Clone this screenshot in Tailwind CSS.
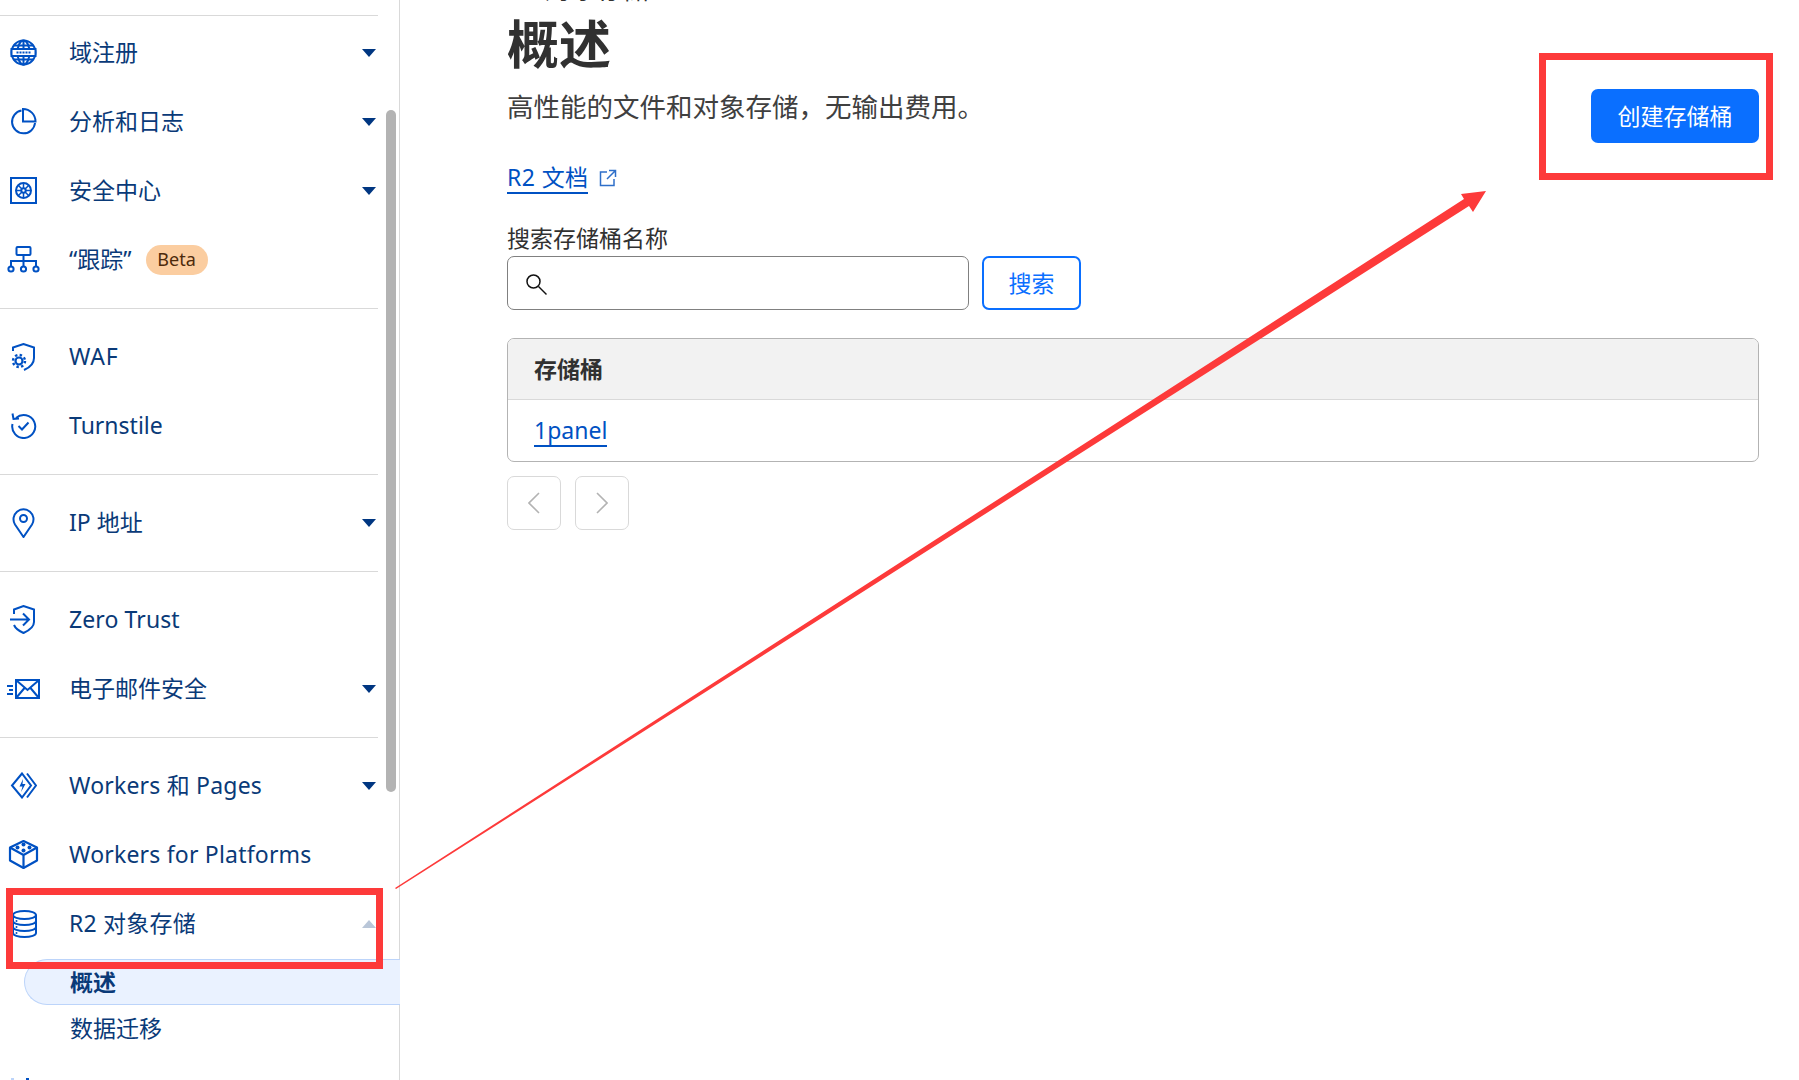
<!DOCTYPE html>
<html lang="zh-CN">

<head>
    <meta charset="UTF-8">
    <title>R2 对象存储</title>
    <script src="https://cdn.jsdelivr.net/npm/@tailwindcss/browser@4"></script>
</head>

<body class="bg-white font-['Noto_Sans','Noto_Sans_CJK_SC',sans-serif] text-[23px] text-[#313131]">
    <div class="relative flex h-[1080px] w-[1799px] overflow-hidden">

        <!-- sidebar -->
        <aside class="relative h-full w-[400px] shrink-0 border-r border-[#d9d9d9] pt-[15px] text-[#0a3a78]">
            <div class="w-[378px] border-t border-[#d9d9d9] pt-[2px] pb-[14px]">
                <div class="flex h-[69px] items-center">
                    <svg class="ml-[10px] mr-[32px] h-[27px] w-[27px] shrink-0" viewBox="0 0 27 27" fill="none" stroke="#0051c3" stroke-width="2"><circle cx="13.500" cy="13.500" r="12"/><ellipse cx="13.500" cy="13.500" rx="6" ry="12"/><path d="M13.500 1.500v25M3.500 6.500h20M3.500 20.500h20"/><path d="M1.500 10h24v7h-24z" fill="#fff"/><path d="M6.500 13.500h14" stroke-width="2.200" stroke-dasharray="2 1"/></svg>
                    <span>域注册</span>
                    <svg class="ml-auto mr-[2px] h-[8px] w-[14px]" viewBox="0 0 14 8"><path d="M0 0h14L7 8z" fill="#003681"/></svg>
                </div>
                <div class="flex h-[69px] items-center">
                    <svg class="ml-[10px] mr-[32px] h-[27px] w-[27px] shrink-0" viewBox="0 0 27 27" fill="none" stroke="#0051c3" stroke-width="2"><path d="M11.500 2.500A11.500 11.500 0 1 0 25 15"/><path d="M13 1A12.500 12.500 0 0 1 25.500 13.500H13z"/></svg>
                    <span>分析和日志</span>
                    <svg class="ml-auto mr-[2px] h-[8px] w-[14px]" viewBox="0 0 14 8"><path d="M0 0h14L7 8z" fill="#003681"/></svg>
                </div>
                <div class="flex h-[69px] items-center">
                    <svg class="ml-[10px] mr-[32px] h-[27px] w-[27px] shrink-0" viewBox="0 0 27 27" fill="none" stroke="#0051c3" stroke-width="2"><rect x="1" y="1" width="25" height="25"/><circle cx="13.500" cy="13.500" r="7.500"/><circle cx="13.500" cy="13.500" r="2.200"/><path d="M13.500 6v5M13.500 16v5M6 13.500h5M16 13.500h5M8.200 8.200l3.500 3.500M15.300 15.300l3.500 3.500M18.800 8.200l-3.500 3.500M11.700 15.300l-3.500 3.500" stroke-width="1.500"/></svg>
                    <span>安全中心</span>
                    <svg class="ml-auto mr-[2px] h-[8px] w-[14px]" viewBox="0 0 14 8"><path d="M0 0h14L7 8z" fill="#003681"/></svg>
                </div>
                <div class="flex h-[69px] items-center">
                    <svg class="ml-[7px] mr-[29px] h-[33px] w-[33px] shrink-0" viewBox="0 0 33 27" fill="none" stroke="#0051c3" stroke-width="2"><rect x="9.500" y="1" width="14" height="8" rx="1"/><path d="M16.500 9v12M4 20v-5h25v5"/><circle cx="4" cy="23" r="2.600"/><circle cx="16.500" cy="23" r="2.600"/><circle cx="29" cy="23" r="2.600"/></svg>
                    <span>“跟踪”</span>
                    <span class="ml-[14px] flex h-[30px] w-[62px] items-center justify-center rounded-full bg-[#fbcda0] text-[18px] text-[#4d2a0c]">Beta</span>
                </div>
            </div>

            <div class="w-[378px] border-t border-[#d9d9d9] pt-[13px] pb-[14px]">
                <div class="flex h-[69px] items-center">
                    <svg class="ml-[10px] mr-[32px] h-[28px] w-[27px] shrink-0" viewBox="0 0 27 28" fill="none" stroke="#0051c3" stroke-width="2"><path d="M3 8V4.500L13.500 1 24 4.500V15c0 5.500-4 9.500-10 12"/><circle cx="9" cy="18" r="3.500" stroke-width="2.200"/><circle cx="9" cy="18" r="6" stroke-width="2.400" stroke-dasharray="2.400 2.300"/></svg>
                    <span class="tracking-[0.8px]">WAF</span>
                </div>
                <div class="flex h-[69px] items-center">
                    <svg class="ml-[10px] mr-[32px] h-[27px] w-[27px] shrink-0" viewBox="0 0 27 27" fill="none" stroke="#0051c3" stroke-width="2"><path d="M6 6a11.500 11.500 0 1 1-3.500 6"/><path d="M2.500 1.500 3.500 7l5.500-.5"/><path d="m8.500 14 3.500 3.500 6.500-7"/></svg>
                    <span>Turnstile</span>
                </div>
            </div>

            <div class="w-[378px] border-t border-[#d9d9d9] pt-[13px] pb-[14px]">
                <div class="flex h-[69px] items-center">
                    <svg class="ml-[10px] mr-[32px] h-[30px] w-[27px] shrink-0" viewBox="0 0 27 30" fill="none" stroke="#0051c3" stroke-width="2"><path d="M13.500 29 5 16.500a10 10 0 1 1 17 0z"/><circle cx="13.500" cy="10.500" r="3.500"/></svg>
                    <span>IP 地址</span>
                    <svg class="ml-auto mr-[2px] h-[8px] w-[14px]" viewBox="0 0 14 8"><path d="M0 0h14L7 8z" fill="#003681"/></svg>
                </div>
            </div>

            <div class="w-[378px] border-t border-[#d9d9d9] pt-[13px] pb-[14px]">
                <div class="flex h-[69px] items-center">
                    <svg class="ml-[10px] mr-[32px] h-[29px] w-[27px] shrink-0" viewBox="0 0 27 29" fill="none" stroke="#0051c3" stroke-width="2"><path d="M4 9V4.500L13.500 1 24 4.500V17c0 5-5 8.500-10.500 11C9 26 5.500 23.500 4 20"/><path d="M0 14.500h19M13 8.500l6 6-6 6"/></svg>
                    <span class="tracking-[0.1px]">Zero Trust</span>
                </div>
                <div class="flex h-[69px] items-center">
                    <svg class="ml-[7px] mr-[29px] h-[20px] w-[33px] shrink-0" viewBox="0 0 33 20" fill="none" stroke="#0051c3" stroke-width="2"><rect x="9" y="1" width="23" height="18"/><path d="m9.500 1.500 11 9.500 11-9.500M9.500 18.500l8-9.500M31.500 18.500l-8-9.500M0 7h6M2 11h4M0 15h6"/></svg>
                    <span>电子邮件安全</span>
                    <svg class="ml-auto mr-[2px] h-[8px] w-[14px]" viewBox="0 0 14 8"><path d="M0 0h14L7 8z" fill="#003681"/></svg>
                </div>
            </div>

            <div class="w-[378px] border-t border-[#d9d9d9] pt-[13px]">
                <div class="flex h-[69px] items-center">
                    <svg class="ml-[10px] mr-[32px] h-[27px] w-[27px] shrink-0" viewBox="0 0 27 27" fill="none" stroke="#0051c3" stroke-width="2"><path d="M12 1.500 2 13.500l10 12 9-12z"/><path d="m17 1.500 9 12-9 12"/><path d="m13 7-3.500 7.500h3L11 20l4.500-8h-3z" fill="#0051c3" stroke="none"/></svg>
                    <span class="tracking-[0.2px]">Workers 和 Pages</span>
                    <svg class="ml-auto mr-[2px] h-[8px] w-[14px]" viewBox="0 0 14 8"><path d="M0 0h14L7 8z" fill="#003681"/></svg>
                </div>
                <div class="flex h-[69px] items-center">
                    <svg class="ml-[8px] mr-[30px] h-[31px] w-[31px] shrink-0" viewBox="0 0 31 31" fill="none" stroke="#0051c3" stroke-width="2.200" stroke-linejoin="round"><path d="M15.500 2 29 8.500v13L15.500 29 2 21.500v-13z"/><path d="M2 8.500 15.500 16 29 8.500M15.500 16v13"/><g fill="#0051c3" stroke="none"><circle cx="15.500" cy="5.500" r="2"/><circle cx="9.500" cy="8.500" r="2"/><circle cx="21.500" cy="8.500" r="2"/><circle cx="15.500" cy="11.500" r="2"/></g></svg>
                    <span class="tracking-[0.2px]">Workers for Platforms</span>
                </div>
                <div class="flex h-[69px] items-center">
                    <svg class="ml-[12px] mr-[32px] h-[28px] w-[25px] shrink-0" viewBox="0 0 25 28" fill="none" stroke="#0051c3" stroke-width="2"><ellipse cx="12.500" cy="5" rx="11.500" ry="4"/><path d="M1 5v18c0 2.200 5 4 11.500 4S24 25.200 24 23V5M1 11c0 2.200 5 4 11.500 4S24 13.200 24 11M1 17c0 2.200 5 4 11.500 4S24 19.200 24 17"/><g fill="#0051c3" stroke="none"><circle cx="4.500" cy="11" r="1"/><circle cx="4.500" cy="17" r="1"/><circle cx="4.500" cy="23" r="1"/></g></svg>
                    <span class="tracking-[0.2px]">R2 对象存储</span>
                    <svg class="ml-auto mr-[2px] h-[8px] w-[14px]" viewBox="0 0 14 8"><path d="M0 8h14L7 0z" fill="#b9c6d8"/></svg>
                </div>
            </div>

            <div class="ml-[24px] -mr-px mt-px flex h-[46px] items-center rounded-l-[23px] border border-r-0 border-[#bcd4fa] bg-[#eaf2ff] pl-[45px] font-bold text-[#0a3a78]">概述</div>
            <div class="flex h-[46px] items-center pl-[70px]">数据迁移</div>

            <!-- top edge of the next item, cut off by the window -->
            <svg class="mt-[27px] ml-[11px] h-[4px] w-[18px]" viewBox="0 0 18 4"><path d="M0 0h3v4H0z" fill="#bcd4fa"/><path d="M15 0h3v4h-3z" fill="#0051c3"/></svg>

            <div class="absolute top-[110px] left-[386px] h-[682px] w-[10px] rounded-full bg-[#b3b3b3]"></div>
        </aside>

        <!-- main -->
        <main class="min-w-0 flex-1 pl-[107px] pr-[40px]">
            <div class="-mt-[26px] h-[42px] text-[26px] leading-[30px]">R2 对象存储</div>

            <div class="flex items-start justify-between">
                <div>
                    <h1 class="text-[52px] leading-[56px] font-bold">概述</h1>
                    <p class="mt-[16px] text-[26.500px] leading-[38px] text-[#404040]">高性能的文件和对象存储&#xFF0C;无输出费用。</p>
                </div>
                <button class="mt-[73px] h-[54px] w-[168px] rounded-[7px] bg-[#0a6fff] text-white">创建存储桶</button>
            </div>

            <div class="mt-[19px] flex items-center">
                <a class="border-b-2 border-[#0051c3] leading-[30px] tracking-[0.4px] text-[#0051c3]">R2 文档</a>
                <svg class="ml-[11px] h-[18px] w-[18px]" viewBox="0 0 18 18" fill="none" stroke="#2f6fc9" stroke-width="1.500"><path d="M8 3H1.500v13.500H15V10M10 1.500h6.500V8M16.500 1.500 8 10"/></svg>
            </div>

            <label class="mt-[29px] block leading-[30px]">搜索存储桶名称</label>
            <div class="mt-[3px] flex gap-[13px]">
                <div class="flex h-[54px] w-[462px] items-center rounded-[7px] border border-[#808080] pl-[17px]">
                    <svg class="mt-[3px] h-[23px] w-[23px]" viewBox="0 0 23 23" fill="none" stroke="#111" stroke-width="1.500"><circle cx="8.500" cy="8.500" r="6.500"/><path d="m13.500 13.500 8 8"/></svg>
                </div>
                <button class="h-[54px] w-[99px] rounded-[7px] border-2 border-[#0a6fff] text-[#0a6fff]">搜索</button>
            </div>

            <div class="mt-[28px] overflow-hidden rounded-[7px] border border-[#b3b3b3]">
                <div class="flex h-[61px] items-center border-b border-[#d9d9d9] bg-[#f2f2f2] pl-[26px] font-bold">存储桶</div>
                <div class="flex h-[61px] items-center pl-[26px]">
                    <a class="border-b-2 border-[#0051c3] leading-[30px] text-[#0051c3]">1panel</a>
                </div>
            </div>

            <div class="mt-[14px] flex gap-[14px]">
                <button class="flex h-[54px] w-[54px] items-center justify-center rounded-[7px] border border-[#d9d9d9]">
                    <svg class="h-[22px] w-[12px]" viewBox="0 0 12 22" fill="none" stroke="#b3b3b3" stroke-width="1.600"><path d="M11 1 1 11l10 10"/></svg>
                </button>
                <button class="flex h-[54px] w-[54px] items-center justify-center rounded-[7px] border border-[#d9d9d9]">
                    <svg class="h-[22px] w-[12px]" viewBox="0 0 12 22" fill="none" stroke="#b3b3b3" stroke-width="1.600"><path d="m1 1 10 10L1 21"/></svg>
                </button>
            </div>
        </main>

        <!-- red annotation marks on top of the page -->
        <div class="absolute top-[888px] left-[6px] h-[81px] w-[377px] border-[7px] border-[#fd3a3a]"></div>
        <div class="absolute top-[53px] left-[1539px] h-[127px] w-[234px] border-[7px] border-[#fd3a3a]"></div>
        <svg class="absolute top-0 left-0 h-[1080px] w-[1799px]" viewBox="0 0 1799 1080" fill="#fd3a3a"><path d="M395 888 1464 199l-3-5 25-3-13 21-4-6L396 889z"/></svg>
    </div>
</body>

</html>
